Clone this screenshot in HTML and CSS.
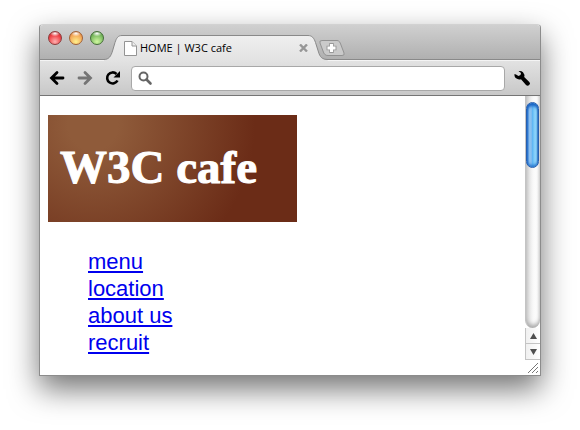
FILE: index.html
```html
<!DOCTYPE html>
<html lang="en">
<head>
    <meta charset="UTF-8">
    <meta name="viewport" content="width=device-width, initial-scale=1.0">
    <title>HOME | W3C cafe</title>
    <link rel="stylesheet" href="styles.css">
</head>
<body>
    <div class="window">
        <div class="tabstrip">
            <div class="lights">
                <button class="light red" aria-label="Close window"></button>
                <button class="light yellow" aria-label="Minimize"></button>
                <button class="light green" aria-label="Zoom"></button>
            </div>
            <div class="tab">
                <svg class="tab-shape" width="224" height="26" viewBox="0 0 224 26">
                    <defs>
                        <linearGradient id="tabFill" x1="0" y1="0" x2="0" y2="1">
                            <stop offset="0" stop-color="#efefef"/>
                            <stop offset="1" stop-color="#e2e2e2"/>
                        </linearGradient>
                    </defs>
                    <path d="M0 26V24.500C5 24.500 7 21 8.500 16L11 7.500C12.500 3 14 .5 18 .5H204C208 .5 210 3 211.500 7.500L214.500 17C216 22 218 24.500 223 24.500L224 26Z" fill="url(#tabFill)"/>
                    <path d="M0 24.500C5 24.500 7 21 8.500 16L11 7.500C12.500 3 14 .5 18 .5H204C208 .5 210 3 211.500 7.500L214.500 17C216 22 218 24.500 224 24.500" fill="none" stroke="#898989"/>
                </svg>
                <svg class="page-icon" width="13" height="15" viewBox="0 0 13 15">
                    <path d="M.5.5H8L12.500 5V14.500H.5Z" fill="#fff" stroke="#949494"/>
                    <path d="M8 .5V5H12.500" fill="#eee" stroke="#949494"/>
                </svg>
                <span class="tab-title">HOME | W3C cafe</span>
                <button class="tab-close" aria-label="Close tab">
                    <svg width="9" height="8" viewBox="0 0 9 8"><path d="M1 .5L8 7.500M8 .5L1 7.500" stroke="#979797" stroke-width="2.400"/></svg>
                </button>
            </div>
            <button class="new-tab" aria-label="New tab">
                <svg width="26" height="17" viewBox="0 0 26 17">
                    <path d="M3 .5H18C20 .5 21 2 22 5L25 13Q26 15.500 23 15.500H9C6 15.500 5 14 4 11L1 3Q0 .5 3 .5Z" fill="#cacaca" stroke="#929292"/>
                    <path d="M12.500 3V13M7.500 8H17.500" stroke="#999" stroke-width="4.600"/>
                    <path d="M12.500 4V12M8.500 8H16.500" stroke="#fff" stroke-width="3"/>
                </svg>
            </button>
        </div>

        <div class="toolbar">
            <button class="tool" aria-label="Back">
                <svg width="16" height="16" viewBox="0 0 16 16"><path d="M8 2.500L2.500 8L8 13.500M3 8H14" fill="none" stroke="#000" stroke-width="2.800" stroke-linecap="round"/></svg>
            </button>
            <button class="tool" aria-label="Forward">
                <svg width="16" height="16" viewBox="0 0 16 16"><path d="M8 2.500L13.500 8L8 13.500M13 8H2" fill="none" stroke="#747474" stroke-width="2.800" stroke-linecap="round"/></svg>
            </button>
            <button class="tool" aria-label="Reload">
                <svg width="16" height="16" viewBox="0 0 16 16">
                    <path d="M12.500 10.500A5.500 5.500 0 1 1 11.500 4" fill="none" stroke="#000" stroke-width="2.600"/>
                    <path d="M15 1V7.500H8.500Z"/>
                </svg>
            </button>
            <label class="omnibox">
                <svg width="15" height="15" viewBox="0 0 15 15">
                    <circle cx="5.500" cy="5.500" r="4" fill="none" stroke="#666" stroke-width="2"/>
                    <path d="M8.500 8.500L12.500 12.500" stroke="#666" stroke-width="2.600" stroke-linecap="round"/>
                </svg>
                <input type="text" aria-label="Address">
            </label>
            <button class="tool wrench" aria-label="Settings">
                <svg width="17" height="17" viewBox="0 0 17 17"><path d="M4.500 1L7 3L6.500 5L4.500 6L2 4.500L.5 4Q0 7.500 3 8.800Q5 9.900 7 9.200L12 14.900Q13.500 16.500 15.200 15T15.300 12L10.200 7Q11 4.500 9 2.200Q7.500 .6 4.500 1Z"/></svg>
            </button>
        </div>

        <div class="viewport">
            <main class="page">
                <h1 class="logo">W3C cafe</h1>
                <ul class="nav">
                    <li><a href="#menu">menu</a></li>
                    <li><a href="#location">location</a></li>
                    <li><a href="#about">about us</a></li>
                    <li><a href="#recruit">recruit</a></li>
                </ul>
            </main>
            <div class="side">
                <div class="scroll-track">
                    <div class="scroll-thumb"></div>
                </div>
                <button class="scroll-arrow" aria-label="Scroll up">
                    <svg width="7" height="6" viewBox="0 0 7 6"><path d="M3.500 0L7 6H0Z" fill="#505050"/></svg>
                </button>
                <button class="scroll-arrow" aria-label="Scroll down">
                    <svg width="7" height="6" viewBox="0 0 7 6"><path d="M3.500 6L7 0H0Z" fill="#505050"/></svg>
                </button>
                <div class="grip">
                    <svg width="12" height="12" viewBox="0 0 12 12"><path d="M1 11L11 1M5 11L11 5M9 11L11 9" stroke="#777"/></svg>
                </div>
            </div>
        </div>
    </div>
</body>
</html>
```

FILE: styles.css
```css
* {
    box-sizing: border-box;
}

body {
    margin: 0;
    padding: 24px 39px 54px;
    background: #fff;
    font-family: "Liberation Sans", Arial, sans-serif;
}

button {
    padding: 0;
    border: 0;
    background: none;
}

svg {
    display: block;
}

.window {
    display: flex;
    flex-direction: column;
    min-height: calc(100vh - 78px);
    border: 1px solid #8c8c8c;
    border-top-color: #d2d2d2;
    border-radius: 4px 4px 0 0;
    background: #fff;
    box-shadow: 0 13px 30px rgba(0, 0, 0, 0.55);
}

/* title bar with the tabs */
.tabstrip {
    display: flex;
    align-items: flex-start;
    height: 35px;
    padding-left: 8px;
    border-bottom: 1px solid #898989;
    border-radius: 3px 3px 0 0;
    background: linear-gradient(#d0d0d0, #b0b0b0);
}

.lights {
    display: flex;
    gap: 7px;
    width: 56px;
    padding-top: 6px;
}

.light {
    flex: none;
    width: 14px;
    height: 14px;
    border: 1px solid #777;
    border-radius: 50%;
}

.red {
    border-color: #8c3b3b;
    background: radial-gradient(ellipse 5px 3px at 50% 12%, #fff, transparent), radial-gradient(circle at 50% 80%, #ffb0b0, #ee3f44 60%, #a82a2c);
}

.yellow {
    border-color: #a06136;
    background: radial-gradient(ellipse 5px 3px at 50% 12%, #fff, transparent), radial-gradient(circle at 50% 80%, #fff08c, #f3a354 65%, #b85f20);
}

.green {
    border-color: #456f38;
    background: radial-gradient(ellipse 5px 3px at 50% 12%, #fff, transparent), radial-gradient(circle at 50% 80%, #d0f8a0, #76b65c 65%, #3b7928);
}

.tab {
    position: relative;
    display: flex;
    align-items: center;
    flex: none;
    width: 224px;
    height: 26px;
    margin-top: 10px;
    padding: 0 16px 0 20px;
}

.tab-shape {
    position: absolute;
    top: 0;
    left: 0;
}

.page-icon,
.tab-title,
.tab-close {
    position: relative;
}

.tab-title {
    flex: 1;
    margin-left: 3px;
    font: 500 11px/16px "Open Sans", "Noto Sans", sans-serif;
    color: #000;
    white-space: nowrap;
}

.tab-close {
    margin-right: 4px;
}

.new-tab {
    margin: 15px 0 0 -9px;
}

/* navigation buttons and address field */
.toolbar {
    display: flex;
    align-items: center;
    height: 36px;
    padding: 0 9px;
    border-top: 1px solid #f4f4f4;
    border-bottom: 1px solid #757575;
    background: linear-gradient(#e2e2e2, #c8c8c8);
}

.tool {
    flex: none;
    width: 16px;
    margin-right: 12px;
}

.tool:nth-child(3) {
    margin-right: 10px;
}

.tool.wrench {
    width: 17px;
    margin: 0;
}

.omnibox {
    display: flex;
    align-items: center;
    flex: 1;
    height: 25px;
    margin-right: 9px;
    padding: 0 6px;
    border: 1px solid #a8a8a8;
    border-radius: 4px;
    background: #fff;
}

.omnibox input {
    flex: 1;
    min-width: 0;
    margin-left: 4px;
    border: 0;
    outline: 0;
    background: none;
    font: 12px "Open Sans", sans-serif;
}

.viewport {
    display: flex;
    flex: 1;
}

.page {
    flex: 1;
    padding: 19px 8px 16px;
}

.logo {
    width: 249px;
    height: 107px;
    margin: 0 0 26px;
    padding-left: 12px;
    background: radial-gradient(circle at 45px 10px, #8f5b3a 25px, #6b2c17 162px);
    color: #fff;
    font: bold 47px/105px "Liberation Serif", serif;
    -webkit-text-stroke: 1px #fff;
}

.nav {
    margin: 0;
    padding-left: 40px;
    list-style: none;
    font-size: 22px;
    line-height: 27px;
}

.nav a {
    color: #0000ee;
}

/* scrollbar */
.side {
    display: flex;
    flex-direction: column;
    width: 15px;
}

.scroll-track {
    flex: 1;
    padding: 6px 0 0;
    border-left: 1px solid #c4c4c4;
    border-radius: 0 0 8px 8px;
    background: linear-gradient(90deg, #d8d8d8, #f8f8f8 50%, #fff 80%, #eee);
    box-shadow: inset 0 -3px 4px #aaa;
}

.scroll-thumb {
    width: 13px;
    height: 66px;
    border: 1px solid #285fae;
    border-radius: 7px;
    background: linear-gradient(90deg, #2871d3, #9bc9f2 20%, #7bb9ef 45%, #60b7f4 50%, #a3e4ff 85%, #528fc5);
    box-shadow: inset 0 3px 3px #1763c4, inset 0 -2px 3px #2879cf;
}

.scroll-arrow {
    display: flex;
    align-items: center;
    justify-content: center;
    height: 16px;
    border: 1px solid #c4c4c4;
    border-width: 0 0 1px 1px;
    background: linear-gradient(90deg, #f0f0f0, #fff);
}

.grip {
    display: flex;
    align-items: flex-end;
    justify-content: flex-end;
    height: 15px;
    padding: 0 1px 1px 0;
}
```
